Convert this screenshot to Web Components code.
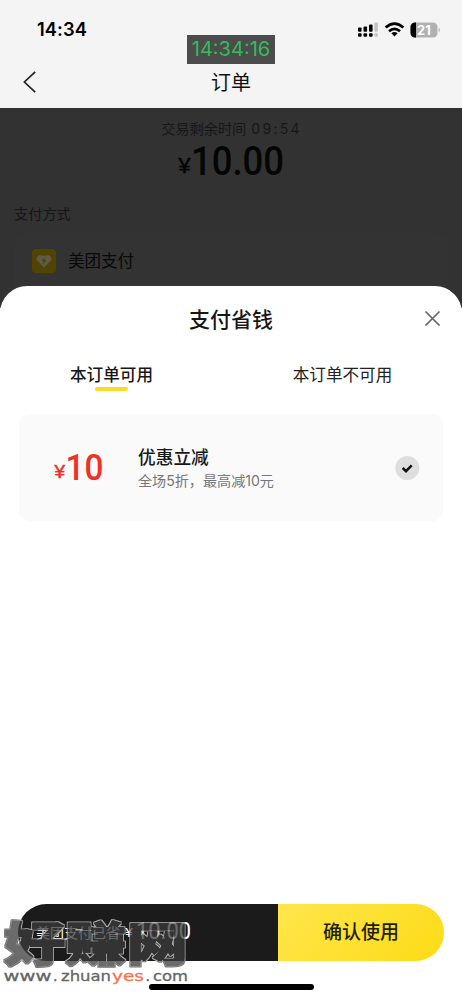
<!DOCTYPE html>
<html lang="zh-CN">
<head>
<meta charset="utf-8">
<title>订单</title>
<style>
html,body{margin:0;height:1000px;overflow:hidden;background:#fff}
body{font-family:Inter,"Noto Sans CJK SC",sans-serif;color:#111}
</style>
</head>
<body>
<order-screen></order-screen>
<script>
function define(name, html) {
  const t = document.createElement('template');
  t.innerHTML = '<style>*{box-sizing:border-box}</style>' + html;
  customElements.define(name, class extends HTMLElement {
    constructor() {
      super();
      this.attachShadow({mode: 'open'}).appendChild(t.content.cloneNode(true));
    }
  });
}

define('status-bar', `<style>
:host{display:flex;height:56px;padding:3px 21px 0 37px;align-items:center;justify-content:space-between;color:#000}
.time{font:600 18.3px/22px Inter,sans-serif;letter-spacing:.1px;margin-top:-1px}
svg{display:block}
</style>
<span class="time">14:34</span>
<svg width="84" height="20" viewBox="0 0 84 20">
<g fill="#000"><rect x="1" y="7.5" width="3.6" height="4.3" rx="1"/><rect x="6.5" y="6.5" width="3.6" height="5.3" rx="1"/><rect x="12" y="4.5" width="3.6" height="7.3" rx="1"/><rect x="1" y="13.2" width="3.6" height="3.6" rx="1"/><rect x="6.5" y="13.2" width="3.6" height="3.6" rx="1"/><rect x="12" y="13.2" width="3.6" height="3.6" rx="1"/></g>
<g fill="#c4c4c4"><rect x="17.3" y="2.5" width="3.6" height="9.3" rx="1"/><rect x="17.3" y="13.2" width="3.6" height="3.6" rx="1"/></g>
<g fill="none" stroke="#000" stroke-width="2.7"><path d="M28.6 7.5Q37.5-.4 46.4 7.5"/><path d="M32 11.3Q37.5 6.3 43 11.3"/></g><path d="M34.4 13.3Q37.5 10.8 40.6 13.3L37.5 16.6Z"/>
<rect x="53.5" y="2.5" width="27" height="15" rx="4.6" fill="#b1b1b1"/><path d="M59 2.5h-.9A4.6 4.6 0 0 0 53.5 7.1v5.8a4.6 4.6 0 0 0 4.6 4.6h.9Z"/><path d="M81.7 7.5q2.4 2.5 0 5Z" fill="#b1b1b1"/>
<text x="66.9" y="14.6" text-anchor="middle" font-family="Inter,sans-serif" font-weight="700" font-size="12.8" fill="#fff">21</text>
</svg>`);

define('nav-bar', `<style>
:host{display:grid;grid-template-columns:60px 1fr 60px;height:52px;align-items:center}
svg{display:block;margin-left:22px}
h1{margin:0;text-align:center;font:400 20px/28px "Noto Sans CJK SC",sans-serif;color:#111}
</style>
<svg width="16" height="24" viewBox="0 0 16 24" fill="none" stroke="#222" stroke-width="1.7"><path d="M13.2 1.8 2.4 12l10.8 10.2"/></svg>
<h1><slot></slot></h1>`);

define('clock-stamp', `<style>
:host{display:flex;align-items:center;justify-content:center;width:88px;height:29px;background:#4c4c4c;color:#32bd58;font:400 20px/29px Inter,sans-serif}
</style><slot></slot>`);

define('order-summary', `<style>
:host{display:block;height:200px;background:#323232;padding-top:9px}
.left{display:flex;justify-content:center;font:400 14.2px/22px "Noto Sans CJK SC",sans-serif;color:#171717;gap:5px}
.left b{font:400 14px/23px Inter,sans-serif;letter-spacing:2.3px;margin-right:-1px}
.price{display:flex;justify-content:center;height:46px}
h2{margin:16px 0 0 14px;font:400 14.2px/22px "Noto Sans CJK SC",sans-serif;color:#151515}
.card{margin:9px 14px 0;padding:0 18px;height:80px;border-radius:12px;background:#333;display:flex;align-items:flex-start;gap:12px;padding-top:16px}
.card span{font:400 16.5px/24px "Noto Sans CJK SC",sans-serif;color:#080808;margin-top:-1px}
svg{display:block;overflow:visible}
</style>
<div class="left"><span>交易剩余时间</span><b>09:54</b></div>
<div class="price"><svg width="106" height="46" viewBox="0 0 106 46" fill="#050505" font-family="Roboto,sans-serif" font-weight="500">
<text x="0" y="33" font-size="21" font-weight="400" stroke="#050505" stroke-width=".3" textLength="13" lengthAdjust="spacingAndGlyphs">¥</text><text x="13" y="35" font-size="40" textLength="93" lengthAdjust="spacingAndGlyphs">10.00</text></svg></div>
<h2>支付方式</h2>
<div class="card"><svg width="24" height="24" viewBox="0 0 24 24"><rect width="24" height="24" rx="4" fill="#514300"/><path d="M7.4 6q4.6 1.6 9.2 0 3.8 2.6 2.8 5L12 18.6 4.6 11Q3.600 8.600 7.400 6Z" fill="#5f5b4b"/><path d="m13.3 7.8-4 4h2.2l-.8 3.6 4-4.5h-2.2Z" fill="#514300"/></svg><span>美团支付</span></div>`);

define('sheet-header', `<style>
:host{display:grid;grid-template-columns:60px 1fr 60px;height:64px;align-items:center;padding-top:1px}
h2{grid-column:2;margin:-2px 0 0;text-align:center;font:500 21px/30px "Noto Sans CJK SC",sans-serif;color:#171717}
svg{display:block;margin-left:22px}
</style><h2><slot></slot></h2>
<svg width="17" height="17" viewBox="0 0 17 17" stroke="#666" stroke-width="1.7"><path d="m1.500 1.500 14 14m0-14-14 14"/></svg>`);

define('sheet-tab', `<style>
:host{display:flex;flex:1;flex-direction:column;align-items:center;font:400 16.6px/24px "Noto Sans CJK SC",sans-serif;color:#222}
:host([active]){font-weight:500;color:#171717}
i{width:33px;height:4px;border-radius:2px;margin-top:1px}
:host([active]) i{background:#fadc25}
</style><span><slot></slot></span><i></i>`);

define('coupon-card', `<style>
:host{display:grid;grid-template-columns:119px 1fr 24px;align-items:center;height:107px;margin:0 19px;padding-right:24px;border-radius:10px;background:#fafafa}
svg{display:block;overflow:visible}
.amount{margin:-1px 0 0 35px}
h3{margin:0;font:500 17.7px/26px "Noto Sans CJK SC",sans-serif;color:#171717}
p{margin:0;font:400 14.1px/24px Inter,"Noto Sans CJK SC",sans-serif;color:#777;white-space:nowrap}
</style>
<svg class="amount" width="52" height="46" viewBox="0 0 52 46" fill="#f13026" font-family="Roboto,sans-serif" font-weight="500"><text x="0" y="34" font-size="18.5" font-weight="400" stroke="#f13026" stroke-width=".3" textLength="11.500" lengthAdjust="spacingAndGlyphs">¥</text><text x="11.5" y="35.500" font-size="37.500" textLength="38" lengthAdjust="spacingAndGlyphs">10</text></svg>
<div><h3><slot name="title"></slot></h3><p><slot></slot></p></div>
<svg width="24" height="24" viewBox="0 0 24 24"><circle cx="12.3" cy="12" r="12" fill="#dedede"/><path d="m7.700 12 3.300 3.200 5.700-5.800" fill="none" stroke="#111" stroke-width="2.5"/></svg>`);

define('pay-bar', `<style>
:host{display:flex;height:57px;margin:0 18px;border-radius:29px;overflow:hidden}
.sum{width:260px;background:#1b1b1b;display:flex;align-items:center;padding-left:18px;color:#fff}
.sum span{font:400 14px/22px "Noto Sans CJK SC",sans-serif;margin-top:-2px}
svg{overflow:visible}
.go{flex:1;background:linear-gradient(135deg,#ffe64c,#fddb16);display:flex;align-items:center;justify-content:center;font:500 19px/28px "Noto Sans CJK SC",sans-serif;color:#221d05;padding-bottom:3px}
</style>
<div class="sum"><span>美团支付已省</span><svg width="74" height="40" viewBox="0 0 74 40" fill="#fff" font-family="Roboto,sans-serif" font-weight="400"><text x="5" y="24" font-size="13" textLength="8" lengthAdjust="spacingAndGlyphs">¥</text><text x="16" y="26" font-size="23" textLength="55" lengthAdjust="spacingAndGlyphs">10.00</text></svg></div>
<div class="go"><slot></slot></div>`);

define('site-watermark', `<style>
:host{display:block}svg{display:block}
</style>
<svg width="200" height="72" viewBox="0 0 200 72">
<defs><filter id="edge" filterUnits="userSpaceOnUse" x="0" y="0" width="200" height="72" color-interpolation-filters="sRGB">
<feMorphology in="SourceAlpha" operator="dilate" radius="1.4" result="wide"/>
<feFlood flood-color="#777" result="base"/>
<feFlood flood-color="#a8a8a8" x="20" y="0" width="180" height="46" result="lit"/>
<feMerge result="tone"><feMergeNode in="base"/><feMergeNode in="lit"/></feMerge>
<feComposite in="tone" in2="wide" operator="in" result="ring0"/>
<feComposite in="ring0" in2="SourceAlpha" operator="out" result="ring"/>
<feComponentTransfer in="SourceGraphic" result="body"><feFuncA type="linear" slope=".76"/></feComponentTransfer>
<feMerge><feMergeNode in="ring"/><feMergeNode in="body"/></feMerge>
</filter></defs>
<g filter="url(#edge)"><text transform="translate(0 46) scale(1 .86)" x="4" y="0" font-family="Noto Sans CJK SC,sans-serif" font-weight="900" font-size="54" textLength="184" lengthAdjust="spacingAndGlyphs" fill="#3b3b3b" stroke="#3b3b3b" stroke-width="1.2" stroke-linejoin="round">好赚网</text></g>
<g font-family="DejaVu Sans,sans-serif" font-size="14.500" fill="#666" stroke="#666" stroke-width=".3"><text x="3.500" y="66" textLength="48" lengthAdjust="spacingAndGlyphs">www</text><text x="53" y="66">.</text><text x="61" y="66" textLength="50" lengthAdjust="spacingAndGlyphs">zhuan</text><text x="112" y="66" textLength="32" lengthAdjust="spacingAndGlyphs" fill="#fa7350" stroke="#fa7350">yes</text><text x="145.500" y="66">.</text><text x="153" y="66" textLength="35" lengthAdjust="spacingAndGlyphs">com</text></g>
</svg>`);

define('pay-sheet', `<style>
:host{display:flex;flex-direction:column;height:714px;background:#fff;border-radius:27px 27px 0 0}
.tabs{display:flex;margin:12px 4px 0 -4px;padding-bottom:23px}
.space{flex:1}
.home{width:165px;height:6px;border-radius:3px;background:#000;margin:23px auto 10px}
</style>
<sheet-header>支付省钱</sheet-header>
<div class="tabs"><sheet-tab active>本订单可用</sheet-tab><sheet-tab>本订单不可用</sheet-tab></div>
<coupon-card><span slot="title">优惠立减</span>全场5折，最高减10元</coupon-card>
<div class="space"></div>
<pay-bar>确认使用</pay-bar>
<div class="home"></div>`);

define('order-screen', `<style>
:host{display:block;position:relative;width:462px;height:1000px;overflow:hidden;background:#f4f4f4}
clock-stamp{position:absolute;left:187px;top:35px}
pay-sheet{position:absolute;left:0;right:0;top:286px}
site-watermark{position:absolute;left:0;top:915px}
</style>
<status-bar></status-bar><nav-bar>订单</nav-bar><order-summary></order-summary>
<pay-sheet></pay-sheet><clock-stamp>14:34:16</clock-stamp><site-watermark></site-watermark>`);
</script>
</body>
</html>
